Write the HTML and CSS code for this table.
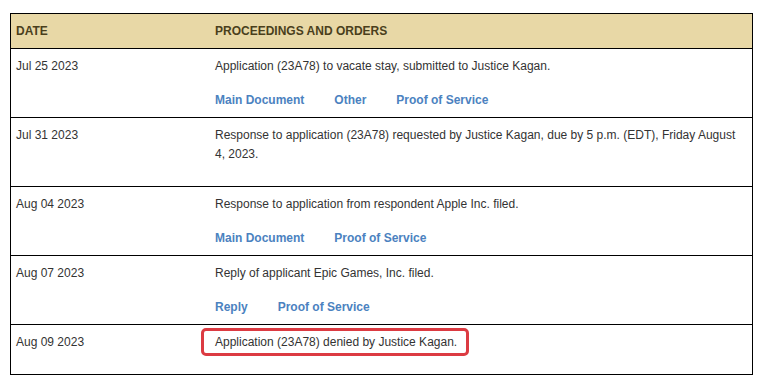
FILE: index.html
```html
<!DOCTYPE html>
<html lang="en">
<head>
    <meta charset="UTF-8">
    <meta name="viewport" content="width=device-width, initial-scale=1.0">
    <title>Docket 23A78</title>
    <link rel="stylesheet" href="styles.css">
</head>
<body>
    <table class="docket">
        <thead>
            <tr>
                <th class="col-date">DATE</th>
                <th>PROCEEDINGS AND ORDERS</th>
            </tr>
        </thead>
        <tbody>
            <tr>
                <td>Jul 25 2023</td>
                <td>
                    <p class="entry">Application (23A78) to vacate stay, submitted to Justice Kagan.</p>
                    <p class="links"><a href="#">Main Document</a><a href="#">Other</a><a href="#">Proof of Service</a></p>
                </td>
            </tr>
            <tr>
                <td>Jul 31 2023</td>
                <td>
                    <p class="entry">Response to application (23A78) requested by Justice Kagan, due by 5 p.m. (EDT), Friday August 4, 2023.</p>
                </td>
            </tr>
            <tr>
                <td>Aug 04 2023</td>
                <td>
                    <p class="entry">Response to application from respondent Apple Inc. filed.</p>
                    <p class="links"><a href="#">Main Document</a><a href="#">Proof of Service</a></p>
                </td>
            </tr>
            <tr>
                <td>Aug 07 2023</td>
                <td>
                    <p class="entry">Reply of applicant Epic Games, Inc. filed.</p>
                    <p class="links"><a href="#">Reply</a><a href="#">Proof of Service</a></p>
                </td>
            </tr>
            <tr>
                <td>Aug 09 2023</td>
                <td>
                    <p class="entry"><span class="marked">Application (23A78) denied by Justice Kagan.</span></p>
                </td>
            </tr>
        </tbody>
    </table>
</body>
</html>
```

FILE: styles.css
```css
body {
    margin: 0;
    padding: 13px 8px 0 10px;
    background: #fff;
    color: #333;
    font-family: "Liberation Sans", Arial, sans-serif;
    font-size: 12px;
    line-height: 19px;
}

.docket {
    width: 743px;
    table-layout: fixed;
    border-collapse: collapse;
    border: 1px solid #000;
}

.docket th {
    background: #e8d8a6;
    color: #4a3f1c;
    font-weight: bold;
    text-align: left;
    padding: 8px 5px 7px;
    border-bottom: 1px solid #000;
}

.docket .col-date {
    width: 189px;
}

.docket td {
    vertical-align: top;
    padding: 8px 10px 7px 5px;
    border-top: 1px solid #000;
}

.docket p {
    margin: 0;
}

.entry {
    margin-bottom: 15px !important;
}

.links a {
    color: #4b82c0;
    font-weight: bold;
    text-decoration: none;
    margin-right: 30px;
}

/* red outline around the ruling */
.marked {
    position: relative;
}

.marked::after {
    content: "";
    position: absolute;
    left: -14px;
    right: -12px;
    top: -7px;
    bottom: -7px;
    border: 3px solid #dc3b42;
    border-radius: 5px;
}
```
